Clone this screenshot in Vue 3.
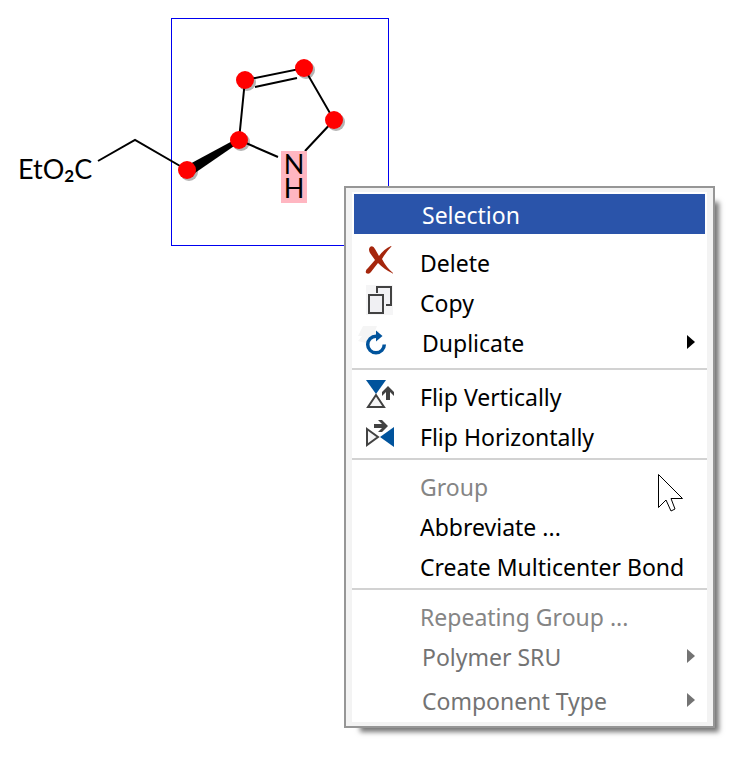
<script setup>
const groups = [
  [
    { label: 'Delete', icon: 'delete' },
    { label: 'Copy', icon: 'copy' },
    { label: 'Duplicate', icon: 'duplicate', submenu: true },
  ],
  [
    { label: 'Flip Vertically', icon: 'flipV' },
    { label: 'Flip Horizontally', icon: 'flipH' },
  ],
  [
    { label: 'Group', disabled: true },
    { label: 'Abbreviate ...' },
    { label: 'Create Multicenter Bond' },
  ],
  [
    { label: 'Repeating Group ...', disabled: true },
    { label: 'Polymer SRU', disabled: true, submenu: true },
    { label: 'Component Type', disabled: true, submenu: true, spaced: true },
  ],
]

const atoms = [
  { x: 187, y: 170 },
  { x: 239, y: 140 },
  { x: 245, y: 80 },
  { x: 304, y: 68 },
  { x: 334, y: 120 },
]
</script>

<template>
  <main class="canvas">
    <svg class="molecule" width="400" height="260" viewBox="0 0 400 260" role="img" aria-label="Molecule">
      <rect class="marquee" x="171.5" y="18.5" width="217" height="227" />
      <circle v-for="a in atoms" :key="'s' + a.x" class="atom-shadow" :cx="a.x + 2" :cy="a.y + 2" r="9" />
      <path class="bond" d="M98 161 L135 140 L187 170 M239 140 L278 157 M305 151 L334 120 L304 68 L245 80 L239 140 M255 87 L297 78" />
      <path d="M238 138 L240 142 L192 175 L186 166 Z" />
      <rect class="hetero" x="281" y="151" width="26" height="52" />
      <circle v-for="a in atoms" :key="a.x" class="atom" :cx="a.x" :cy="a.y" r="9" />
      <text class="label" x="18" y="179">EtO<tspan class="sub" dy="3">2</tspan><tspan dy="-3">C</tspan></text>
      <text class="label mid" x="294" y="174">N</text>
      <text class="label mid" x="294" y="198">H</text>
    </svg>

    <div class="menu" role="menu" aria-label="Selection">
      <div class="body">
        <button class="title" type="button">Selection</button>
        <div v-for="(group, i) in groups" :key="i" class="group">
          <button
            v-for="item in group"
            :key="item.label"
            class="item"
            :class="{ indented: item.submenu, spaced: item.spaced }"
            type="button"
            role="menuitem"
            :disabled="item.disabled"
          >
            <span class="icon">
              <svg v-if="item.icon === 'delete'" width="40" height="40" viewBox="0 0 40 40">
                <path fill="#a5260c" d="M13 3 Q16 1 18 5 L22 12 Q27 5 34 2 Q35 2 34 3 Q29 8 25 15 Q29 23 36 29 Q36 30 35 29 Q28 26 21 19 Q17 24 14 28 Q12 31 9 29 Q8 26 11 24 L18 16 L13 9 Q11 5 13 3 Z" />
              </svg>
              <svg v-else-if="item.icon === 'copy'" width="40" height="40" viewBox="0 0 40 40">
                <rect fill="#f5f5f6" x="9" y="1" width="27" height="30" />
                <path fill="#f2f2f5" stroke="#424242" stroke-width="2" d="M20 9 V3 H34 V21 H29" />
                <rect fill="#f0f0f3" stroke="#424242" stroke-width="2" x="12" y="11" width="14" height="18" />
              </svg>
              <svg v-else-if="item.icon === 'duplicate'" width="40" height="40" viewBox="0 0 40 40">
                <path fill="#f5f5f5" d="M6 2 H20 L18 7 H23 L12 20 L1 17 L5 12 H1 Z" />
                <path fill="none" stroke="#00539c" stroke-width="3.5" d="M21 12.2 H19 A8.3 8.3 0 1 0 27.3 20.5" />
                <path fill="#00539c" d="M19 6.5 L25.5 12 L19 17.5 Z" />
              </svg>
              <svg v-else-if="item.icon === 'flipV'" width="40" height="40" viewBox="0 0 40 40">
                <path fill="#00539c" d="M9 2 H29 L19 16 Z" />
                <path fill="#f5f5f6" stroke="#424242" stroke-width="2" d="M19 17 L11 29 H27 Z" />
                <path fill="#424242" d="M31 8 L37 14 V18 L33 14 V22 H29 V14 L25 18 V14 Z" />
              </svg>
              <svg v-else-if="item.icon === 'flipH'" width="40" height="40" viewBox="0 0 40 40">
                <path fill="#00539c" d="M37 9 V29 L23 19 Z" />
                <path fill="#f5f5f6" stroke="#424242" stroke-width="2" d="M10 11 L21 19 L10 27 Z" />
                <path fill="#424242" d="M31 8 L25 14 H21 L25 10 H17 V6 H25 L21 2 H25 Z" />
              </svg>
            </span>
            <span class="text">{{ item.label }}</span>
            <svg v-if="item.submenu" class="arrow" width="8" height="14" viewBox="0 0 8 14">
              <path fill="currentColor" d="M0 0 L8 7 L0 14 Z" />
            </svg>
          </button>
        </div>
      </div>
    </div>

    <svg class="cursor" width="28" height="40" viewBox="0 0 28 40" aria-hidden="true">
      <path fill="#fff" stroke="#000" d="M1.5 1.5 V34.5 L9 27 L14 38 L18 36 L14 25.5 H25.5 Z" />
    </svg>
  </main>
</template>

<style>
body {
  margin: 0;
  background: #fff;
}
</style>

<style scoped>
.canvas {
  position: relative;
  min-height: 100vh;
}

.molecule {
  display: block;
}

.marquee {
  fill: none;
  stroke: #0000f0;
}

.bond {
  fill: none;
  stroke: #000;
  stroke-width: 2;
}

.atom {
  fill: #f00;
}

.atom-shadow {
  fill: #b4b4b4;
}

.hetero {
  fill: #ffb6c1;
}

.label {
  font: 27px Lato, sans-serif;
}

.sub {
  font-size: 17px;
  font-weight: 700;
}

.mid {
  text-anchor: middle;
}

.menu {
  position: absolute;
  top: 186px;
  left: 344px;
  box-sizing: border-box;
  min-width: 371px;
  padding: 4px 6px;
  border: 2px solid #969696;
  background: #f3f3f3;
  box-shadow: 10px 10px 5px -6px #777;
}

.body {
  padding-top: 2px;
  background: #fff;
}

.title,
.item {
  display: flex;
  align-items: center;
  height: 40px;
  padding: 0;
  border: 0;
  background: none;
  color: #000;
  font: 23px "Noto Sans", "Open Sans", sans-serif;
  text-align: left;
  white-space: nowrap;
}

.title {
  width: calc(100% - 4px);
  margin: 0 2px;
  padding: 2px 0 0 68px;
  background: #2a54aa;
  color: #fff;
}

.group {
  padding: 8px 0 0;
  border-top: 2px solid #d2d2d2;
}

.group:nth-child(2) {
  padding-bottom: 4px;
  border-top-color: transparent;
}

.item {
  width: 100%;
  padding-right: 12px;
}

.item:disabled {
  color: #858585;
}

.icon {
  width: 40px;
  height: 40px;
  margin: 0 23px 0 5px;
}

.icon svg {
  display: block;
}

.text {
  flex: 1;
  padding-bottom: 2px;
}

.indented .text {
  padding-left: 2px;
}

.indented:disabled {
  color: #737373;
}

.spaced {
  margin-top: 4px;
}

.arrow {
  margin-bottom: 4px;
}

.cursor {
  position: absolute;
  top: 473px;
  left: 657px;
}
</style>
